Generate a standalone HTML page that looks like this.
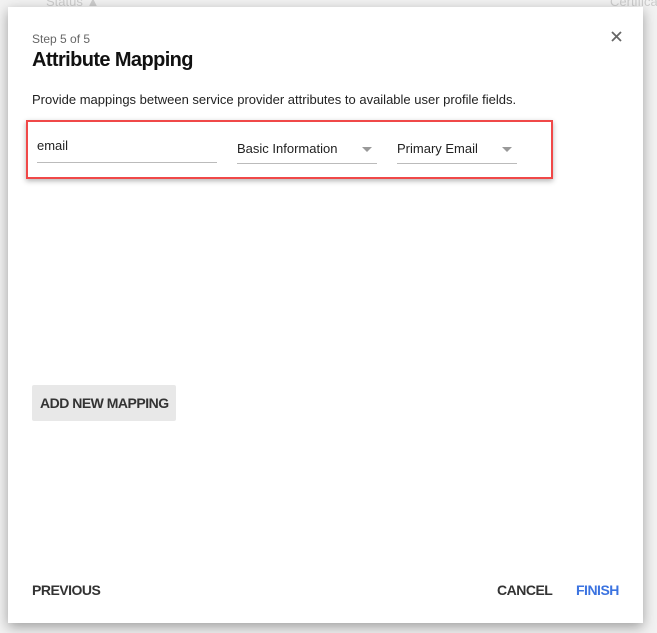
<!DOCTYPE html>
<html><head><style>
body{margin:0;width:657px;height:633px;background:#f2f2f2;font-family:"Liberation Sans",sans-serif;position:relative;overflow:hidden}
.bg{position:absolute;color:#ccc;font-size:13px}
.dlg{position:absolute;left:8px;top:7px;width:635px;height:616px;background:#fff;box-shadow:0 4px 12px rgba(0,0,0,.35)}
.a{position:absolute;white-space:nowrap}
.ul{position:absolute;height:1px;background:#bbb}
.tri{position:absolute;width:0;height:0;border-left:5px solid transparent;border-right:5px solid transparent;border-top:5px solid #999}
.btn{font-size:14px;font-weight:bold;color:#333;letter-spacing:-0.5px}
</style></head><body>
<div class="bg" style="left:46px;top:-6px">Status ▲</div>
<div class="bg" style="left:610px;top:-6px">Certifica</div>
<div class="dlg"></div>
<div class="a" style="left:32px;top:32px;font-size:12px;color:#666">Step 5 of 5</div>
<div class="a" style="left:32px;top:49px;font-size:20px;font-weight:bold;color:#111;letter-spacing:-0.6px">Attribute Mapping</div>
<svg class="a" style="left:611px;top:31px" width="11" height="11" viewBox="0 0 11 11"><path d="M1 1L10 10M10 1L1 10" stroke="#666" stroke-width="1.8"/></svg>
<div class="a" style="left:32px;top:92px;font-size:13px;color:#222">Provide mappings between service provider attributes to available user profile fields.</div>
<div style="position:absolute;left:26px;top:120px;width:523px;height:55px;border:2px solid #f04848;box-shadow:0 2px 5px rgba(0,0,0,.3)"></div>
<div class="a" style="left:37px;top:138px;font-size:13px;color:#222">email</div>
<div class="ul" style="left:37px;top:162px;width:180px"></div>
<div class="a" style="left:237px;top:141px;font-size:13px;color:#222">Basic Information</div>
<div class="tri" style="left:362px;top:147px"></div>
<div class="ul" style="left:237px;top:163px;width:140px"></div>
<div class="a" style="left:397px;top:141px;font-size:13px;color:#222">Primary Email</div>
<div class="tri" style="left:502px;top:147px"></div>
<div class="ul" style="left:397px;top:163px;width:120px"></div>
<div style="position:absolute;left:32px;top:385px;width:144px;height:36px;background:#e8e8e8;border-radius:2px"></div>
<div class="a btn" style="left:40px;top:395px">ADD NEW MAPPING</div>
<div class="a btn" style="left:32px;top:582px">PREVIOUS</div>
<div class="a btn" style="left:497px;top:582px">CANCEL</div>
<div class="a btn" style="left:576px;top:582px;color:#3b73e0">FINISH</div>
</body></html>
